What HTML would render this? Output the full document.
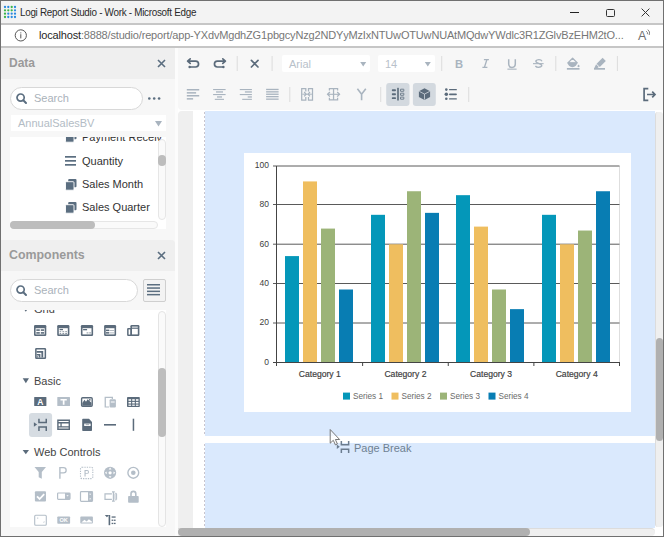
<!DOCTYPE html>
<html><head><meta charset="utf-8">
<style>
*{margin:0;padding:0;box-sizing:border-box}
html,body{width:664px;height:537px;overflow:hidden;background:#fff;font-family:"Liberation Sans",sans-serif}
.a{position:absolute}
svg{position:absolute;overflow:visible}
.t{position:absolute;white-space:nowrap;line-height:1}
</style></head><body>
<!-- window border -->
<div class="a" style="left:0;top:0;width:664px;height:537px;border:1px solid #707070;z-index:50;pointer-events:none"></div>
<!-- title bar -->
<div class="a" style="left:0;top:0;width:664px;height:23px;background:#f3f3f3"></div>
<div class="a" style="left:0;top:23px;width:664px;height:2px;background:#c6c6c6"></div>
<svg style="left:4px;top:5.7px" width="13" height="13">
 <g fill="#2b8be0">
  <circle cx="1" cy="1" r="1.15"/><circle cx="4.3" cy="1" r="1.15"/><circle cx="11" cy="1" r="1.15"/>
  <circle cx="11" cy="4.3" r="1.15"/>
  <circle cx="4.3" cy="7.7" r="1.15"/><circle cx="7.7" cy="7.7" r="1.15"/><circle cx="11" cy="7.7" r="1.15"/>
  <circle cx="4.3" cy="11" r="1.15"/><circle cx="7.7" cy="11" r="1.15"/><circle cx="11" cy="11" r="1.15"/>
 </g>
 <g fill="#3cb54a">
  <circle cx="7.7" cy="1" r="1.15"/>
  <circle cx="1" cy="4.3" r="1.15"/><circle cx="4.3" cy="4.3" r="1.15"/><circle cx="7.7" cy="4.3" r="1.15"/>
  <circle cx="1" cy="7.7" r="1.15"/><circle cx="1" cy="11" r="1.15"/>
 </g>
</svg>
<div class="t" style="left:20.2px;top:7.2px;font-size:10.5px;letter-spacing:-0.3px;color:#2a2a2a;transform:scaleX(0.94);transform-origin:0 0">Logi Report Studio - Work - Microsoft Edge</div>
<!-- window controls -->
<div class="a" style="left:570px;top:12px;width:9px;height:1px;background:#222"></div>
<div class="a" style="left:606px;top:8.5px;width:8.5px;height:8px;border:1px solid #333;border-radius:1.5px"></div>
<svg style="left:641px;top:8px" width="9" height="9"><path d="M0.6 0.6L8.4 8.4M8.4 0.6L0.6 8.4" stroke="#333" stroke-width="1"/></svg>
<!-- address bar -->
<div class="a" style="left:0;top:25px;width:664px;height:21px;background:#fff"></div>
<div class="a" style="left:0;top:46px;width:664px;height:2px;background:#c6c6c6"></div>
<svg style="left:14px;top:29px" width="14" height="14"><circle cx="6.8" cy="6.4" r="5.6" fill="none" stroke="#555" stroke-width="1"/><rect x="6.3" y="5.2" width="1" height="4.2" fill="#555"/><rect x="6.3" y="3.4" width="1" height="1" fill="#555"/></svg>
<div class="t" style="left:39px;top:30px;font-size:11px;letter-spacing:-0.17px;color:#777"><span style="color:#1f1f1f">localhost</span>:8888/studio/report/app-YXdvMgdhZG1pbgcyNzg2NDYyMzIxNTUwOTUwNUAtMQdwYWdlc3R1ZGlvBzEHM2tO...</div>
<div class="t" style="left:638px;top:30px;font-size:12.5px;color:#707070">A</div>
<svg style="left:645px;top:29px" width="7" height="8"><path d="M1.2 2.2Q3 3.2 2.4 5.2M2.8 0.6Q5.6 2.6 4.2 6" fill="none" stroke="#707070" stroke-width="0.9"/></svg>

<!-- LEFT PANEL -->
<div class="a" style="left:1px;top:48px;width:174px;height:488px;background:#f7f7f7"></div>
<div class="a" style="left:175px;top:48px;width:3px;height:488px;background:#fcfcfc"></div>
<!-- Data header -->
<div class="a" style="left:1px;top:48px;width:174px;height:31px;background:#efefef"></div>
<div class="t" style="left:9px;top:57px;font-size:12px;font-weight:bold;color:#9a9a9a">Data</div>
<svg style="left:157px;top:59px" width="9" height="9"><path d="M1 1L8 8M8 1L1 8" stroke="#5b6e80" stroke-width="1.6"/></svg>

<!-- search -->
<div class="a" style="left:10px;top:87px;width:133px;height:23px;background:#fff;border:1px solid #d8d8d8;border-radius:12px"></div>
<svg style="left:16px;top:93px" width="12" height="12"><circle cx="4.6" cy="4.6" r="3.6" fill="none" stroke="#5b6e80" stroke-width="1.7"/><path d="M7.3 7.3L10 10" stroke="#5b6e80" stroke-width="2" stroke-linecap="round"/></svg>
<div class="t" style="left:34px;top:93px;font-size:11px;color:#aab2ba">Search</div>
<svg style="left:148px;top:97px" width="14" height="4"><circle cx="1.3" cy="1.5" r="1.3" fill="#5b6e80"/><circle cx="6.2" cy="1.5" r="1.3" fill="#5b6e80"/><circle cx="11.1" cy="1.5" r="1.3" fill="#5b6e80"/></svg>
<!-- dropdown -->
<div class="a" style="left:11px;top:115px;width:155px;height:16px;background:#fff"></div>
<div class="t" style="left:18px;top:118px;font-size:11px;color:#b3bcc5">AnnualSalesBV</div>
<svg style="left:155px;top:121px" width="7" height="6"><path d="M0 0H7L3.5 5.5Z" fill="#a9b4bf"/></svg>
<!-- tree list -->
<div class="a" style="left:10px;top:137px;width:156px;height:92px;background:#fff;overflow:hidden">
  <svg style="left:55px;top:-6px" width="12" height="11"><rect x="3.2" y="0" width="8.3" height="8.3" rx="1" fill="#5b6e80"/><rect x="0.5" y="2.7" width="8.5" height="8.5" rx="1" fill="#5b6e80" stroke="#fff" stroke-width="0.9"/></svg>
  <div class="t" style="left:72px;top:-5px;font-size:11px;color:#333">Payment Receiv</div>
  <svg style="left:55px;top:19px" width="12" height="10"><rect y="0" width="11" height="1.7" fill="#5b6e80"/><rect y="4" width="11" height="1.7" fill="#5b6e80"/><rect y="8" width="11" height="1.7" fill="#5b6e80"/></svg>
  <div class="t" style="left:72px;top:19px;font-size:11px;color:#333">Quantity</div>
  <svg style="left:55px;top:42px" width="12" height="11"><rect x="3.2" y="0" width="8.3" height="8.3" rx="1" fill="#5b6e80"/><rect x="0.5" y="2.7" width="8.5" height="8.5" rx="1" fill="#5b6e80" stroke="#fff" stroke-width="0.9"/></svg>
  <div class="t" style="left:72px;top:42px;font-size:11px;color:#333">Sales Month</div>
  <svg style="left:55px;top:65px" width="12" height="11"><rect x="3.2" y="0" width="8.3" height="8.3" rx="1" fill="#5b6e80"/><rect x="0.5" y="2.7" width="8.5" height="8.5" rx="1" fill="#5b6e80" stroke="#fff" stroke-width="0.9"/></svg>
  <div class="t" style="left:72px;top:65px;font-size:11px;color:#333">Sales Quarter</div>
  <!-- v scroll -->
  <div class="a" style="left:148px;top:2px;width:8px;height:81px;border:1px solid #e6e6e6;border-radius:4px;background:#fafafa"></div>
  <div class="a" style="left:148px;top:18px;width:8px;height:11px;border-radius:4px;background:#bdbdbd"></div>
  <!-- h scroll -->
  <div class="a" style="left:0;top:84px;width:148px;height:8px;border:1px solid #e6e6e6;border-radius:4px;background:#fafafa"></div>
  <div class="a" style="left:0;top:84px;width:85px;height:8px;border-radius:4px;background:#bdbdbd"></div>
</div>

<!-- Components header -->
<div class="a" style="left:1px;top:240px;width:174px;height:31px;background:#efefef;border-radius:0 4px 0 0"></div>
<div class="t" style="left:9px;top:249px;font-size:12.4px;font-weight:bold;color:#9a9a9a">Components</div>
<svg style="left:157px;top:251px" width="9" height="9"><path d="M1 1L8 8M8 1L1 8" stroke="#5b6e80" stroke-width="1.6"/></svg>
<div class="a" style="left:10px;top:279px;width:128px;height:23px;background:#fff;border:1px solid #d8d8d8;border-radius:12px"></div>
<svg style="left:16px;top:285px" width="12" height="12"><circle cx="4.6" cy="4.6" r="3.6" fill="none" stroke="#5b6e80" stroke-width="1.7"/><path d="M7.3 7.3L10 10" stroke="#5b6e80" stroke-width="2" stroke-linecap="round"/></svg>
<div class="t" style="left:34px;top:285px;font-size:11px;color:#aab2ba">Search</div>
<div class="a" style="left:143px;top:279px;width:23px;height:23px;background:#f3f3f3;border:1px solid #cfcfcf;border-radius:2px"></div>
<svg style="left:147px;top:284px" width="14" height="12"><g fill="#5b6e80"><rect y="0" width="13" height="1.5"/><rect y="3.3" width="13" height="1.5"/><rect y="6.6" width="13" height="1.5"/><rect y="9.9" width="13" height="1.5"/></g></svg>

<!-- components list -->
<div class="a" style="left:10px;top:310px;width:156px;height:217px;background:#fff;overflow:hidden" id="clist">
<svg style="left:-10px;top:-310px" width="664" height="537">
<defs></defs>
<g fill="#5b6b7b">
<!-- Grid header -->
<path d="M22.6 307.2h6.4l-3.2 4.6z"/>
</g>
<text x="34" y="313.4" font-size="11" fill="#444">Grid</text>
<g fill="#5b6b7b">
<!-- icon1 table -->
<rect x="34" y="325" width="12.3" height="11" rx="1.2"/><rect x="35.6" y="328.2" width="9.1" height="6.2" fill="#fff"/>
<rect x="36.3" y="329.3" width="3.5" height="1.6"/><rect x="40.8" y="329.3" width="3.3" height="1.6"/>
<rect x="36.3" y="332.1" width="3.5" height="1.6"/><rect x="40.8" y="332.1" width="3.3" height="1.6"/>
<!-- icon2 -->
<rect x="57.2" y="325" width="12.2" height="11" rx="1.2"/><rect x="58.8" y="328.2" width="9" height="6.2" fill="#fff"/>
<rect x="59.6" y="328.9" width="3.4" height="1.3"/>
<rect x="59.6" y="331.2" width="1.6" height="1" opacity=".7"/><rect x="62.4" y="331.2" width="1.8" height="1" opacity=".7"/><rect x="65.2" y="331.2" width="1.8" height="1" opacity=".7"/>
<rect x="59.6" y="333" width="1.6" height="1" opacity=".7"/><rect x="62.4" y="333" width="1.8" height="1" opacity=".7"/><rect x="65.2" y="333" width="1.8" height="1" opacity=".7"/>
<!-- icon3 -->
<rect x="80.9" y="325" width="12.2" height="11" rx="1.2"/><rect x="82.5" y="328.2" width="9" height="6.2" fill="#fff"/>
<rect x="83.1" y="329" width="4" height="1.3"/>
<rect x="86.6" y="332.4" width="1.8" height="1" opacity=".7"/><rect x="89.2" y="332.4" width="1.8" height="1" opacity=".7"/>
<!-- icon4 -->
<rect x="104.1" y="325" width="12" height="11" rx="1.2"/><rect x="105.7" y="328.2" width="8.8" height="6.2" fill="#fff"/>
<rect x="106" y="329.6" width="3.2" height="1.5"/><rect x="109.6" y="330" width="4.4" height=".8" opacity=".6"/>
<rect x="106" y="332.1" width="3.2" height="1.5"/><rect x="109.6" y="332.5" width="4.4" height=".8" opacity=".6"/>
<!-- icon5 -->
<rect x="130.4" y="325" width="9" height="11" rx="1.2"/><rect x="132" y="326.6" width="5.8" height="1" fill="#fff"/><rect x="132" y="328.8" width="5.8" height="5.6" fill="#fff"/>
<rect x="127.1" y="328" width="4.6" height="8" rx="1"/><rect x="128.6" y="329.4" width="1.6" height="5.2" fill="#fff"/>
<!-- row2 icon -->
<rect x="35.1" y="348" width="11" height="11" rx="1.2"/><rect x="36.6" y="349.5" width="8" height="8" fill="#fff"/>
<path d="M36.6 351h6.6v6.5h-1.8v-4.7h-4.8z"/>
<path d="M36.6 353.9h3.8v3.6h-1.7v-1.9h-2.1z"/>
<rect x="36.6" y="356.3" width="1.4" height="1.2"/>
<!-- Basic -->
<path d="M22.7 378.3h6.3l-3.15 4.9z"/>
</g>
<text x="34" y="384.6" font-size="11" fill="#444">Basic</text>
<!-- A -->
<rect x="34.2" y="397" width="12.2" height="9" rx="0.5" fill="#5b6b7b"/>
<text x="40.3" y="405" font-size="8.5" font-weight="bold" fill="#fff" text-anchor="middle">A</text>
<!-- T -->
<rect x="57.3" y="397" width="12.7" height="9" rx="0.5" fill="#b4bec8"/>
<path d="M60.5 399h6.3v1.6h-2.3v4.2h-1.7v-4.2h-2.3z" fill="#fff"/>
<!-- image -->
<rect x="81.6" y="397.7" width="10.6" height="8.6" rx="1" fill="none" stroke="#5b6b7b" stroke-width="1.4"/>
<path d="M82.3 405.8v-2.8l2.2-3.2 1.5 2 1.6-2.6 3.9 3.6v3z" fill="#5b6b7b"/>
<circle cx="89.8" cy="399.8" r="0.9" fill="#5b6b7b"/>
<!-- device (light) -->
<path d="M104.6 396.8h8.4v2.2h-1.3v-0.9h-5.8v8.3h3.2v1.2h-4.5z" fill="#b4bec8"/>
<rect x="109.6" y="399.3" width="6.3" height="8.3" rx="1" fill="#b4bec8"/>
<rect x="110.8" y="401.5" width="3.9" height="1" fill="#fff"/>
<!-- table grid -->
<rect x="127" y="397" width="12.8" height="10" rx="0.8" fill="#5b6b7b"/>
<g fill="#fff">
<rect x="128.5" y="399.2" width="2.6" height="1.6"/><rect x="132.2" y="399.2" width="2.6" height="1.6"/><rect x="135.9" y="399.2" width="2.6" height="1.6"/>
<rect x="128.5" y="401.9" width="2.6" height="1.6"/><rect x="132.2" y="401.9" width="2.6" height="1.6"/><rect x="135.9" y="401.9" width="2.6" height="1.6"/>
<rect x="128.5" y="404.6" width="2.6" height="1.2"/><rect x="132.2" y="404.6" width="2.6" height="1.2"/><rect x="135.9" y="404.6" width="2.6" height="1.2"/>
</g>
<!-- row2: selected -->
<rect x="29" y="413" width="23.1" height="24.1" rx="3" fill="#d6dce2"/>
<g fill="#5b6b7b">
<path d="M33.9 422.2l3.2 2.3-3.2 2.3z"/>
<path d="M38.2 418.7h1.5v3.1h5.8v-3.1h1.5v4.6h-8.8z"/>
<path d="M38.2 431h1.5v-3.2h5.8v3.2h1.5v-4.7h-8.8z"/>
<!-- card icon -->
<path fill-rule="evenodd" d="M57.2 419.4h12.8v10.6h-12.8z M58.6 421.1h10v1h-10z M58.6 423.4h1.8v2.9h-1.8z M61.7 423.4h6.9v2.9h-6.9z M58.6 427.6h10v0.9h-10z"/>
<!-- doc icon -->
<path d="M83 418.7h6l3 3.2v8.4a0.8 .8 0 0 1-.8.8h-8.2a.8 .8 0 0 1-.8-.8v-10.8a.8 .8 0 0 1 .8-.8z"/>
</g>
<rect x="84.2" y="423.6" width="6.4" height="2.4" fill="#fff"/>
<rect x="85.6" y="424.5" width="3.6" height="0.6" fill="#5b6b7b"/>
<rect x="104" y="424" width="12" height="1.6" fill="#5b6b7b"/>
<rect x="132.7" y="418.7" width="1.5" height="12.1" fill="#5b6b7b"/>

<!-- Web Controls -->
<path d="M22.6 450h6.4l-3.2 4.3z" fill="#5b6b7b"/>
<text x="34" y="456.2" font-size="11" fill="#444">Web Controls</text>
<g fill="#b4bec8">
<!-- filter -->
<path d="M34.5 467h11.5l-4.2 5v6.8l-3.1-1.6v-5.2z"/>
<!-- P -->
<path d="M59.2 467h4.3a3.3 3.3 0 0 1 0 6.6h-2.9v5.2h-1.4z M60.6 468.3v4h2.9a2 2 0 0 0 0-4z" fill-rule="evenodd"/>
<!-- dotted P -->
<rect x="80.5" y="467.3" width="12.3" height="11.3" rx="1.5" fill="none" stroke="#b4bec8" stroke-width="1.1" stroke-dasharray="1.3 1.1"/>
<path d="M84.5 470h2.6a1.9 1.9 0 0 1 0 3.8h-1.5v2.6h-1.1z M85.6 471v1.9h1.5a.95 .95 0 0 0 0-1.9z" fill-rule="evenodd"/>
<!-- circle arrows -->
<circle cx="110.1" cy="472.8" r="6.1"/>
<!-- radio -->
<circle cx="133.3" cy="472.8" r="5.4" fill="none" stroke="#b4bec8" stroke-width="1.4"/>
<circle cx="133.3" cy="472.8" r="2.3"/>
<!-- checkbox -->
<rect x="34.9" y="491.3" width="11.1" height="10.2" rx="1"/>
<!-- dropdown -->
<rect x="57.6" y="493" width="12.4" height="6.4" rx="0.8" fill="none" stroke="#b4bec8" stroke-width="1.2"/>
<rect x="65" y="493" width="5" height="6.4"/>
<!-- listbox -->
<rect x="80.5" y="491.6" width="12" height="9.8" rx="0.8" fill="none" stroke="#b4bec8" stroke-width="1.2"/>
<rect x="88" y="491.6" width="4.5" height="9.8"/>
<!-- text input -->
<path d="M104.4 493.3h7.5v1.2h-6.3v4.2h6.3v1.2h-7.5z"/>
<path d="M112 491.3h2.8v1.1h-.8v8.2h.8v1.1h-2.8v-1.1h.8v-8.2h-.8z"/>
<rect x="115" y="493.3" width="1.6" height="6.6" rx=".5" fill="none" stroke="#b4bec8" stroke-width="1"/>
<!-- lock -->
<path d="M130.2 496v-2.2a3.2 3.2 0 0 1 6.4 0v2.2h-1.6v-2.2a1.6 1.6 0 0 0-3.2 0v2.2z"/>
<rect x="128.1" y="496" width="10.6" height="6.8" rx=".8"/>
<!-- date -->
<rect x="34.7" y="515.3" width="11.6" height="10" rx="1" fill="none" stroke="#b4bec8" stroke-width="1.1"/>
<!-- OK -->
<rect x="57.3" y="516.4" width="12.8" height="7.3" rx=".8"/>
<!-- image btn -->
<rect x="80.3" y="516.6" width="12.6" height="7" rx=".8"/>
</g>
<path d="M37.3 517.6h.9v1.2h-.9z M43 522.6l1.4-1.6v1.6z" fill="#b4bec8"/>
<text x="63.7" y="522.3" font-size="5.6" font-weight="bold" fill="#fff" text-anchor="middle">OK</text>
<path d="M81.3 522.6l3.2-2.8 2.1 1.6 2.3-2.2 3.2 2.6v.8z" fill="#fff"/>
<!-- checkmark -->
<path d="M37 496.4l2.6 2.6 4.6-4.8" fill="none" stroke="#fff" stroke-width="1.8"/>
<!-- dropdown arrow -->
<path d="M66.4 495.2h2.3l-1.15 1.4z" fill="#fff"/>
<path d="M89 493.7h2.3l-1.15 1.3z M89 499.2h2.3l-1.15-1.3z" fill="#fff"/>
<!-- circle arrow internals -->
<g fill="#fff">
<path d="M110.1 467.6l1.4 1.8h-2.8z M110.1 478l1.4-1.8h-2.8z M104.9 472.8l1.8-1.4v2.8z M115.3 472.8l-1.8-1.4v2.8z"/>
<circle cx="110.1" cy="472.8" r="1.6"/>
</g>
<!-- tree (dark) -->
<g fill="#5b6b7b">
<path d="M104.8 515h4.3l-2.15 2.3z"/>
<rect x="108.6" y="515" width="1.6" height="10.2"/>
<rect x="111.6" y="516.4" width="4" height="1.3"/>
<rect x="111.6" y="519.6" width="1.6" height="1.3"/><rect x="113.8" y="519.6" width="1.8" height="1.3"/>
<rect x="111.6" y="522.8" width="1.6" height="1.3"/><rect x="113.8" y="522.8" width="1.8" height="1.3"/>
</g>
</svg>
<!-- list scrollbar -->
<div class="a" style="left:148px;top:1px;width:8px;height:216px;border:1px solid #e4e4e4;border-radius:4px;background:#fafafa"></div>
<div class="a" style="left:148px;top:58px;width:8px;height:69px;border-radius:4px;background:#bdbdbd"></div>

</div>

<!-- TOOLBAR -->
<div class="a" style="left:178px;top:48px;width:485px;height:62px;background:#f7f7f7;border-radius:0 0 0 4px"></div>
<!-- dropdowns -->
<div class="a" style="left:282px;top:55px;width:88px;height:17px;background:#fff;border-radius:2px"></div>
<div class="t" style="left:289px;top:59px;font-size:11px;color:#b8c1ca">Arial</div>
<div class="a" style="left:378px;top:55px;width:57px;height:17px;background:#fff;border-radius:2px"></div>
<div class="t" style="left:385px;top:59px;font-size:11px;color:#b8c1ca">14</div>

<svg style="left:0;top:0" width="664" height="537">
<!-- row1 -->
<g fill="none" stroke="#5b6b7b" stroke-width="1.7" stroke-linecap="round" stroke-linejoin="round">
<path d="M190.2 58.8L187.6 61.1L190.2 63.4 M188 61.1H195.6A2.95 2.95 0 0 1 195.6 67H190"/>
<path d="M222.8 58.8L225.4 61.1L222.8 63.4 M225 61.1H217.4A2.95 2.95 0 0 0 217.4 67H223"/>
<path d="M251.4 60.4L258 67 M258 60.4L251.4 67"/>
</g>
<circle cx="189.6" cy="67" r="1.2" fill="#5b6b7b"/>
<circle cx="223.4" cy="67" r="1.2" fill="#5b6b7b"/>
<g fill="#dcdcdc">
<rect x="236.7" y="56" width="1" height="15"/>
<rect x="271.6" y="56" width="1" height="15"/>
<rect x="441.2" y="56" width="1" height="15"/>
<rect x="555.3" y="56" width="1" height="15"/>
<rect x="616.9" y="56" width="1" height="15"/>
<rect x="289.3" y="87" width="1" height="15"/>
<rect x="380.2" y="87" width="1" height="15"/>
<rect x="468.2" y="87" width="1" height="15"/>
</g>
<g fill="#a9b4bf">
<path d="M360.2 62h6l-3 4.5z"/>
<path d="M424.8 62h6l-3 4.5z"/>
</g>
<!-- B I U S -->
<text x="459.1" y="67.8" font-size="11.2" font-weight="bold" fill="#a9b4bf" text-anchor="middle">B</text>
<path d="M483.9 59.6h5 M482.4 67.4h5 M486.9 59.6L484.4 67.4" fill="none" stroke="#a9b4bf" stroke-width="1.4"/>
<path d="M508.7 59.2v4.9a3.3 3.3 0 0 0 6.6 0v-4.9" fill="none" stroke="#a9b4bf" stroke-width="1.5"/>
<rect x="507.4" y="68.6" width="9.2" height="1.1" fill="#a9b4bf"/>
<path d="M542 61.2A3.4 2.4 0 0 0 535.8 61c0 1.3 1.3 1.8 2.9 2.3 1.8.6 3.1 1.1 3.1 2.5a3.5 2.3 0 0 1-6.4 .2" fill="none" stroke="#a9b4bf" stroke-width="1.3"/>
<rect x="533" y="63.1" width="10.6" height="1.1" fill="#a9b4bf"/>
<!-- fill -->
<g fill="#a9b4bf">
<path d="M572.6 58.2L577.3 62.9H567.9Z" fill="none" stroke="#a9b4bf" stroke-width="1.3" stroke-linejoin="round"/><path d="M567.6 62.6H577.2A4.8 4.6 0 0 1 567.6 62.6Z"/>
<path d="M578.6 64.4l1.1 1.7a1.15 1.15 0 1 1-2.3 0z"/>
<rect x="566.9" y="68" width="12.6" height="1.7"/>
<!-- pen -->
<path d="M602.6 57.8l3.2 3.2-6 6-3.2-3.2z"/><path d="M596.1 64.3l2.7 2.7-1.3 1.1h-3.2z"/>
<rect x="594" y="68" width="11" height="1.7"/>
</g>
<!-- row2 align -->
<g fill="#a9b4bf">
<rect x="186.8" y="89" width="12.4" height="1.5"/><rect x="186.8" y="92.1" width="9.3" height="1.5"/><rect x="186.8" y="95" width="12.4" height="1.5"/><rect x="186.8" y="98.1" width="6.3" height="1.5"/>
<rect x="213.1" y="89" width="12.5" height="1.1"/><rect x="216" y="91.3" width="7" height="1.3"/><rect x="213.1" y="94" width="12.5" height="1.1"/><rect x="217" y="96.3" width="5" height="1.3"/><rect x="214.8" y="98.8" width="9.2" height="1.1"/>
<rect x="239.8" y="89" width="12.1" height="1.1"/><rect x="244.9" y="91.3" width="7" height="1.3"/><rect x="239.8" y="94" width="12.1" height="1.1"/><rect x="247.7" y="96.3" width="4.2" height="1.3"/><rect x="242.2" y="98.8" width="9.7" height="1.1"/>
<rect x="266.1" y="88.8" width="12.5" height="1.3"/><rect x="266.1" y="91.2" width="12.5" height="1.3"/><rect x="266.1" y="93.6" width="12.5" height="1.3"/><rect x="266.1" y="96" width="12.5" height="1.3"/><rect x="266.1" y="98.5" width="12.5" height="1.3"/>
</g>
<g fill="none" stroke="#a9b4bf" stroke-width="1.5">
<!-- merge -->
<path d="M305.8 91.4V88.6H301.7V100.1H305.8V97 M308.5 91.4V88.6H312.5V100.1H308.5V97" stroke-width="1.25"/>
<path d="M302.3 94.2H311.9" stroke-width="1"/>
<path d="M304.2 92L306.1 94.2L304.2 96.4 M310 92L308.1 94.2L310 96.4" stroke-width="1.2"/>
<!-- split -->
<path d="M329.4 90.6V88.7H337.6V90.6 M329.4 97.8V99.9H337.6V97.8 M333.55 88.7V99.9" stroke-width="1.25"/>
<path d="M327.6 94.3H339.6" stroke-width="1.1"/>
<path d="M329.9 92L327.6 94.3L329.9 96.6 M337.2 92L339.5 94.3L337.2 96.6" stroke-width="1.3"/>
<!-- Y -->
<path d="M357.4 88.8L361.6 94.2L365.8 88.8 M361.6 94V100.2" stroke-width="1.6"/>
</g>
<!-- selected buttons -->
<rect x="386.2" y="83" width="23.3" height="22.9" rx="3" fill="#d3d9df"/>
<rect x="412.9" y="83" width="22.9" height="22.9" rx="3" fill="#d3d9df"/>
<g fill="#5b6b7b">
<rect x="391.8" y="89.3" width="4.2" height="1.9" rx=".9"/><rect x="391.8" y="93.3" width="4.2" height="1.9" rx=".9"/><rect x="391.8" y="97.2" width="4.2" height="1.9" rx=".9"/>
<rect x="397.2" y="87.8" width="1.6" height="12.7"/>
</g>
<g fill="none" stroke="#5b6b7b" stroke-width=".8">
<rect x="400.5" y="89.2" width="3.3" height="2.1" rx=".2"/><rect x="400.5" y="93.2" width="3.3" height="2.1" rx=".2"/><rect x="400.5" y="97.1" width="3.3" height="2.1" rx=".2"/>
</g>
<path d="M424.5 88.2L430.1 91.2V97L424.5 99.9L418.9 97V91.2Z" fill="#5b6b7b"/>
<path d="M419.3 91.4L424.5 94.1L429.7 91.4 M424.5 94.1V99.6" fill="none" stroke="#d3d9df" stroke-width=".8"/>
<!-- list -->
<g fill="#5b6b7b">
<circle cx="446.3" cy="89.6" r="1.3"/><circle cx="446.3" cy="94.3" r="1.75"/><circle cx="446.3" cy="98.8" r="1.3"/>
<rect x="449" y="89" width="7.9" height="1.2" rx=".5"/><rect x="449" y="93.4" width="7.9" height="1.8" rx=".9"/><rect x="449" y="98.2" width="7.9" height="1.2" rx=".5"/>
</g>
<!-- exit -->
<path d="M648.3 88.6H644.1V100.4H648.3 M647 94.5H655 M652.2 91.7L655 94.5L652.2 97.3" fill="none" stroke="#5b6b7b" stroke-width="1.7"/>
</svg>

<!-- CANVAS -->
<div class="a" style="left:178px;top:111px;width:15px;height:417px;background:#efefef;border-radius:4px 0 0 0"></div>
<div class="a" style="left:193px;top:111px;width:12px;height:417px;background:#fff"></div>
<div class="a" style="left:205px;top:111px;width:450px;height:417px;background:#dae9fd"></div>
<div class="a" style="left:204px;top:111px;width:1px;height:417px;background:repeating-linear-gradient(transparent 0 1px,#c9c4cc 1px 3px,transparent 3px 4px)"></div>
<div class="a" style="left:193px;top:436px;width:462px;height:7px;background:#fff"></div>
<!-- right scroll -->
<div class="a" style="left:655px;top:111px;width:8px;height:425px;background:#fff"></div>
<div class="a" style="left:655px;top:112px;width:8px;height:415px;background:#efefef;border-left:1px solid #dcdcdc;border-radius:3px"></div>
<div class="a" style="left:655.5px;top:338px;width:7.5px;height:103px;background:#b0b0b0;border-radius:3.5px"></div>
<!-- bottom scroll -->
<div class="a" style="left:178px;top:528px;width:485px;height:8px;background:#fff"></div>
<div class="a" style="left:178px;top:528px;width:477px;height:8px;background:#efefef;border-top:1px solid #dcdcdc;border-radius:0 4px 4px 0"></div>
<div class="a" style="left:178px;top:528px;width:352px;height:8px;background:#b0b0b0;border-radius:4px"></div>

<!-- chart box -->
<div class="a" style="left:244px;top:153px;width:387px;height:259px;background:#fff"></div>
<svg style="left:0;top:0" width="664" height="537" id="chart">
<line x1="619.5" y1="166" x2="619.5" y2="362" stroke="#dedede" stroke-width="1"/>
<line x1="273" y1="166.00" x2="619.5" y2="166.00" stroke="#5a5a5a" stroke-width="1"/>
<line x1="273" y1="204.50" x2="619.5" y2="204.50" stroke="#5a5a5a" stroke-width="1"/>
<line x1="273" y1="244.20" x2="619.5" y2="244.20" stroke="#5a5a5a" stroke-width="1"/>
<line x1="273" y1="283.50" x2="619.5" y2="283.50" stroke="#5a5a5a" stroke-width="1"/>
<line x1="273" y1="323.00" x2="619.5" y2="323.00" stroke="#5a5a5a" stroke-width="1"/>
<rect x="285.00" y="256.09" width="14" height="105.91" fill="#0497b9"/>
<rect x="303.00" y="181.42" width="14" height="180.58" fill="#efbe5f"/>
<rect x="321.00" y="228.58" width="14" height="133.42" fill="#9cb478"/>
<rect x="339.00" y="289.50" width="14" height="72.50" fill="#087db3"/>
<rect x="371.00" y="214.82" width="14" height="147.18" fill="#0497b9"/>
<rect x="389.00" y="244.30" width="14" height="117.70" fill="#efbe5f"/>
<rect x="407.00" y="191.24" width="14" height="170.76" fill="#9cb478"/>
<rect x="425.00" y="212.86" width="14" height="149.14" fill="#087db3"/>
<rect x="456.00" y="195.17" width="14" height="166.83" fill="#0497b9"/>
<rect x="474.00" y="226.61" width="14" height="135.39" fill="#efbe5f"/>
<rect x="492.00" y="289.50" width="14" height="72.50" fill="#9cb478"/>
<rect x="510.00" y="309.14" width="14" height="52.86" fill="#087db3"/>
<rect x="542.00" y="214.82" width="14" height="147.18" fill="#0497b9"/>
<rect x="560.00" y="244.30" width="14" height="117.70" fill="#efbe5f"/>
<rect x="578.00" y="230.54" width="14" height="131.46" fill="#9cb478"/>
<rect x="596.00" y="191.24" width="14" height="170.76" fill="#087db3"/>
<line x1="276.5" y1="166" x2="276.5" y2="366" stroke="#444" stroke-width="1"/>
<line x1="273" y1="362.5" x2="619.5" y2="362.5" stroke="#444" stroke-width="1"/>
<line x1="362.62" y1="362" x2="362.62" y2="366" stroke="#444" stroke-width="1"/>
<line x1="448.25" y1="362" x2="448.25" y2="366" stroke="#444" stroke-width="1"/>
<line x1="533.88" y1="362" x2="533.88" y2="366" stroke="#444" stroke-width="1"/>
<line x1="619.50" y1="362" x2="619.50" y2="366" stroke="#444" stroke-width="1"/>
<text x="269" y="168.00" text-anchor="end" font-size="8.5" fill="#404040">100</text>
<text x="269" y="207.30" text-anchor="end" font-size="8.5" fill="#404040">80</text>
<text x="269" y="246.60" text-anchor="end" font-size="8.5" fill="#404040">60</text>
<text x="269" y="285.90" text-anchor="end" font-size="8.5" fill="#404040">40</text>
<text x="269" y="325.20" text-anchor="end" font-size="8.5" fill="#404040">20</text>
<text x="269" y="364.50" text-anchor="end" font-size="8.5" fill="#404040">0</text>
<text x="319.81" y="376.5" text-anchor="middle" font-size="8.6" fill="#404040" stroke="#404040" stroke-width="0.18">Category 1</text>
<text x="405.44" y="376.5" text-anchor="middle" font-size="8.6" fill="#404040" stroke="#404040" stroke-width="0.18">Category 2</text>
<text x="491.06" y="376.5" text-anchor="middle" font-size="8.6" fill="#404040" stroke="#404040" stroke-width="0.18">Category 3</text>
<text x="576.69" y="376.5" text-anchor="middle" font-size="8.6" fill="#404040" stroke="#404040" stroke-width="0.18">Category 4</text>
<rect x="343" y="392.6" width="7" height="7" fill="#0497b9"/>
<text x="353" y="398.8" font-size="8.2" fill="#6a6a6a">Series 1</text>
<rect x="391.5" y="392.6" width="7" height="7" fill="#efbe5f"/>
<text x="401.5" y="398.8" font-size="8.2" fill="#6a6a6a">Series 2</text>
<rect x="440" y="392.6" width="7" height="7" fill="#9cb478"/>
<text x="450" y="398.8" font-size="8.2" fill="#6a6a6a">Series 3</text>
<rect x="488.5" y="392.6" width="7" height="7" fill="#087db3"/>
<text x="498.5" y="398.8" font-size="8.2" fill="#6a6a6a">Series 4</text>
</svg>

<!-- page break drag -->
<svg style="left:0;top:0" width="664" height="537">
<g fill="#5f7184" opacity=".9">
<path d="M336.8 444.6l3 2.2-3 2.2z"/>
<path d="M340.6 441h1.5v3.1h5.8v-3.1h1.5v4.6h-8.8z"/>
<path d="M340.6 453.1h1.5v-3.2h5.8v3.2h1.5v-4.7h-8.8z"/>
</g>
<path d="M330.2 429.5V443.2L333.3 440.3L335.4 444.9L337.4 444L335.4 439.5H339.6Z" fill="#fff" fill-opacity=".6" stroke="#6a6a6a" stroke-width="0.9" stroke-linejoin="round"/>
</svg>
<div class="t" style="left:354px;top:442.5px;font-size:11px;color:#6f8192">Page Break</div>

</body></html>
